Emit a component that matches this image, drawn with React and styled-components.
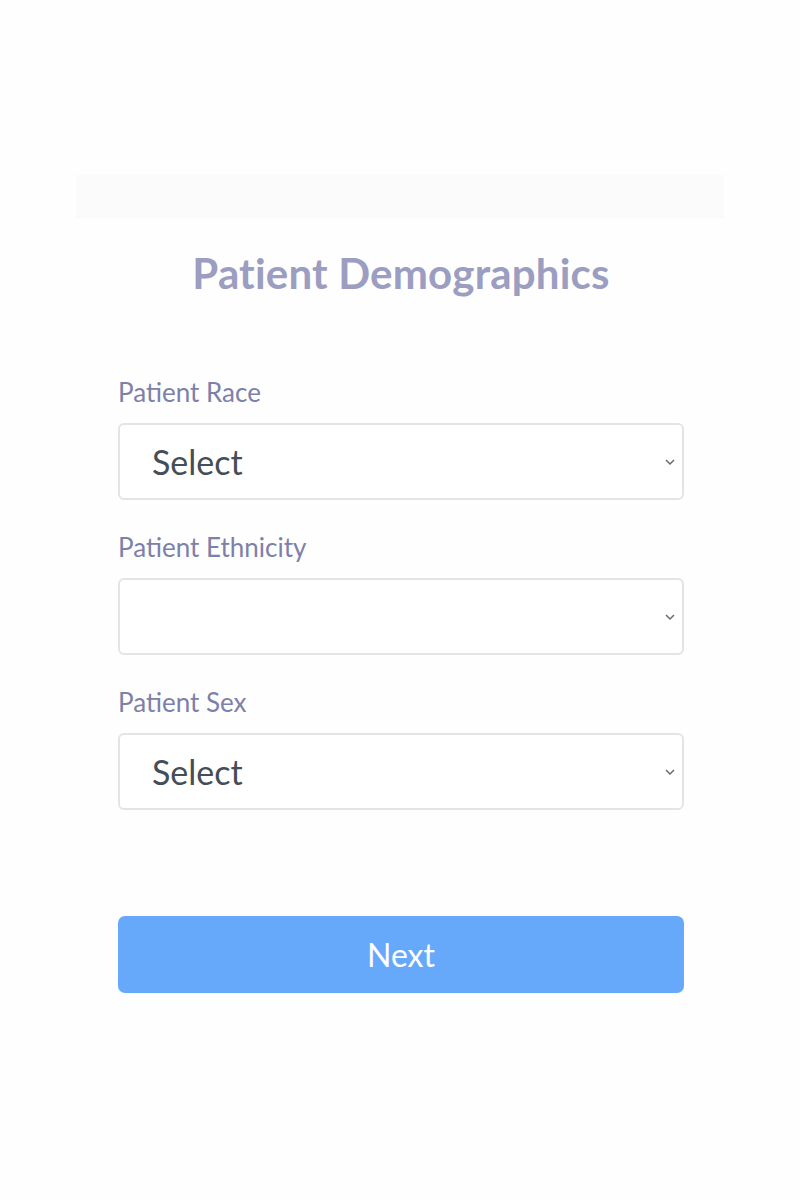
import React from 'react';
import styled, { createGlobalStyle } from 'styled-components';

const Global = createGlobalStyle`
  html, body { margin: 0; padding: 0; background: #fefefe; }
  body { font-family: "Lato", "Noto Sans", sans-serif; }
`;

const Page = styled.div`
  width: 800px; min-height: 1200px;
  padding-top: 175px; box-sizing: border-box;
  display: flex; justify-content: center; align-items: flex-start;
`;

const Card = styled.div`
  width: 648px; background: #fefefe;
  box-shadow: 0 0 2px rgba(0,0,0,0.015);
`;

const Band = styled.div`
  height: 43px; background: #fbfbfb;
`;

const Body = styled.div`
  padding: 30px 40px 28px 42px;
  display: flex; flex-direction: column;
`;

const Title = styled.h1`
  margin: 0 0 79px; text-align: center;
  font-size: 42px; line-height: 50px; font-weight: 700;
  color: #9b9dc1; letter-spacing: 0.2px;
`;

const Field = styled.div`
  display: flex; flex-direction: column;
  margin-bottom: ${p => p.$last ? '106px' : '32px'};
`;

const Label = styled.label`
  font-size: 26px; line-height: 30px; color: #7d80a9;
  margin-bottom: 16px;
`;

const SelectWrap = styled.div`
  position: relative; height: 77px;
`;

const Select = styled.select`
  appearance: none; -webkit-appearance: none;
  width: 100%; height: 100%; box-sizing: border-box;
  border: 2px solid #e3e4e6; border-radius: 6px; background: #fff;
  padding: 0 40px 0 32px;
  font-family: inherit; font-size: 34px; color: #454d56;
  outline: none;
`;

const Chevron = styled.svg`
  position: absolute; right: 7px; top: 50%; margin-top: -5px;
  width: 14px; height: 10px; pointer-events: none;
`;

const Button = styled.button`
  height: 77px; border: 0; border-radius: 7px;
  background: #66a9fb; color: #fff;
  font-family: inherit; font-size: 32px;
`;

function Dropdown({ value }) {
  return (
    <SelectWrap>
      <Select defaultValue={value}>
        <option value={value}>{value}</option>
      </Select>
      <Chevron viewBox="0 0 14 10">
        <path d="M3 3 L7 7 L11 3" fill="none" stroke="#6a6a6a" strokeWidth="1.5" />
      </Chevron>
    </SelectWrap>
  );
}

export default function App() {
  return (
    <Page>
      <Global />
      <Card>
        <Band />
        <Body>
          <Title>Patient Demographics</Title>
          <Field>
            <Label>Patient Race</Label>
            <Dropdown value="Select" />
          </Field>
          <Field>
            <Label>Patient Ethnicity</Label>
            <Dropdown value="" />
          </Field>
          <Field $last>
            <Label>Patient Sex</Label>
            <Dropdown value="Select" />
          </Field>
          <Button>Next</Button>
        </Body>
      </Card>
    </Page>
  );
}
